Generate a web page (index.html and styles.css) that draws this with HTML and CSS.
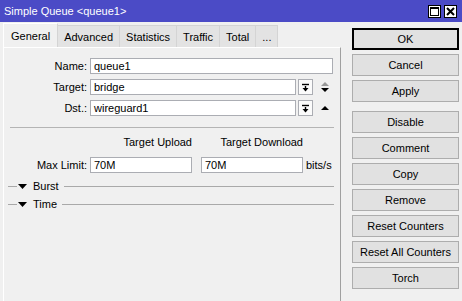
FILE: index.html
```html
<!DOCTYPE html>
<html lang="en">
  <head>
    <meta charset="UTF-8" />
    <title>Simple Queue &lt;queue1&gt;</title>
    <link rel="stylesheet" href="styles.css">
  </head>
  <body>
    <div class="titlebar">
      <span class="title">Simple Queue &lt;queue1&gt;</span>
      <div class="win-btns">
        <span class="win-btn">
          <svg width="9" height="9" viewBox="0 0 9 9"><rect x="0.5" y="0.5" width="8" height="8" fill="none" stroke="#000"/><rect x="0" y="0" width="9" height="2" fill="#000"/></svg>
        </span>
        <span class="win-btn">
          <svg width="9" height="9" viewBox="0 0 9 9"><path d="M1 1 L8 8 M8 1 L1 8" stroke="#000" stroke-width="2"/></svg>
        </span>
      </div>
    </div>

    <div class="main">
      <div class="left">
        <div class="tabs">
          <div class="tab active">General</div>
          <div class="tab">Advanced</div>
          <div class="tab">Statistics</div>
          <div class="tab">Traffic</div>
          <div class="tab">Total</div>
          <div class="tab">...</div>
        </div>

        <div class="panel">
          <div class="row">
            <span class="label">Name:</span>
            <span class="field wide">queue1</span>
          </div>
          <div class="row">
            <span class="label">Target:</span>
            <span class="field mid">bridge</span>
            <span class="drop">
              <svg width="9" height="9" viewBox="0 0 9 9"><path d="M1 1.5 H8" stroke="#000" stroke-width="1.4"/><path d="M4.5 3 V6" stroke="#000" stroke-width="1.4"/><path d="M1.5 5 H7.5 L4.5 8.5 Z" fill="#000"/></svg>
            </span>
            <span class="spin">
              <svg width="10" height="12" viewBox="0 0 10 12"><path d="M1 5 L5 1 L9 5 Z" fill="#999"/><path d="M1 7 L9 7 L5 11 Z" fill="#000"/></svg>
            </span>
          </div>
          <div class="row">
            <span class="label">Dst.:</span>
            <span class="field mid">wireguard1</span>
            <span class="drop">
              <svg width="9" height="9" viewBox="0 0 9 9"><path d="M1 1.5 H8" stroke="#000" stroke-width="1.4"/><path d="M4.5 3 V6" stroke="#000" stroke-width="1.4"/><path d="M1.5 5 H7.5 L4.5 8.5 Z" fill="#000"/></svg>
            </span>
            <span class="spin">
              <svg width="10" height="12" viewBox="0 0 10 12"><path d="M1 8 L5 4 L9 8 Z" fill="#000"/></svg>
            </span>
          </div>

          <div class="sep"></div>

          <div class="heads">
            <span class="label"></span>
            <span class="head">Target Upload</span>
            <span class="head second">Target Download</span>
          </div>
          <div class="row limit">
            <span class="label">Max Limit:</span>
            <span class="field half">70M</span>
            <span class="field half second">70M</span>
            <span class="unit">bits/s</span>
          </div>

          <div class="group first">
            <span class="line short"></span>
            <svg class="caret" width="9" height="5" viewBox="0 0 9 5"><path d="M0 0 H9 L4.5 5 Z" fill="#000"/></svg>
            <span class="group-name">Burst</span>
            <span class="line"></span>
          </div>
          <div class="group">
            <span class="line short"></span>
            <svg class="caret" width="9" height="5" viewBox="0 0 9 5"><path d="M0 0 H9 L4.5 5 Z" fill="#000"/></svg>
            <span class="group-name">Time</span>
            <span class="line"></span>
          </div>
        </div>
      </div>

      <div class="actions">
        <button class="btn default">OK</button>
        <button class="btn">Cancel</button>
        <button class="btn spaced">Apply</button>
        <button class="btn">Disable</button>
        <button class="btn">Comment</button>
        <button class="btn">Copy</button>
        <button class="btn">Remove</button>
        <button class="btn">Reset Counters</button>
        <button class="btn">Reset All Counters</button>
        <button class="btn">Torch</button>
      </div>
    </div>
  </body>
</html>
```

FILE: styles.css
```css
* {
  box-sizing: border-box;
}
body {
  margin: 0;
  width: 462px;
  height: 301px;
  overflow: hidden;
  background-color: #f0f0f0;
  color: #000;
  font-family: "Liberation Sans", Arial, sans-serif;
  font-size: 11px;
}
.titlebar {
  height: 22px;
  background-color: #4b4bc6;
  color: #fff;
  display: flex;
  align-items: center;
  padding: 0 5px 0 4px;
}
.title {
  flex: 1;
  font-size: 11px;
}
.win-btns {
  display: flex;
  gap: 3px;
}
.win-btn {
  width: 13px;
  height: 13px;
  background-color: #fff;
  border: 1px solid #000;
  display: flex;
  align-items: center;
  justify-content: center;
}
.main {
  display: flex;
  height: 279px;
}
.left {
  width: 341px;
  padding-left: 3px;
  display: flex;
  flex-direction: column;
}
.tabs {
  height: 25px;
  display: flex;
  align-items: flex-end;
}
.tab {
  height: 22px;
  padding: 0 6px;
  background-color: #e3e3e3;
  border: 1px solid #d4d4d4;
  border-bottom: none;
  margin-right: -1px;
  display: flex;
  align-items: center;
}
.tab.active {
  height: 24px;
  padding: 0 7px;
  background-color: #f0f0f0;
  border-color: #fff #d4d4d4 transparent #fff;
}
.panel {
  flex: 1;
  padding-top: 10px;
  border-top: 1px solid #fff;
  border-left: 1px solid #fff;
  border-right: 1px solid #a0a0a0;
}
.row {
  display: flex;
  align-items: center;
  height: 16px;
  margin-bottom: 5px;
}
.label {
  width: 86px;
  padding-right: 3px;
  text-align: right;
  flex-shrink: 0;
}
.field {
  height: 16px;
  line-height: 14px;
  padding: 0 3px;
  background-color: #fff;
  border: 1px solid #abadb3;
}
.field.wide {
  width: 243px;
}
.field.mid {
  width: 206px;
}
.field.half {
  width: 102px;
}
.field.second,
.head.second {
  margin-left: 9px;
}
.drop {
  width: 15px;
  height: 16px;
  margin-left: 2px;
  background-color: #fbfbfb;
  border: 1px solid #abadb3;
  display: flex;
  align-items: center;
  justify-content: center;
}
.spin {
  margin-left: 7px;
  display: flex;
}
.sep {
  margin: 11px 6px 0 6px;
  border-top: 1px solid #b4b4b4;
}
.heads {
  display: flex;
  height: 14px;
  line-height: 14px;
  margin-top: 7px;
}
.head {
  width: 102px;
  text-align: right;
}
.row.limit {
  margin-top: 8px;
  margin-bottom: 0;
}
.unit {
  margin-left: 3px;
}
.group {
  display: flex;
  align-items: center;
  height: 14px;
  margin-top: 4px;
}
.group.first {
  margin-top: 6px;
}
.line {
  flex: 1;
  height: 1px;
  margin: 0 6px 0 5px;
  background-color: #a9a9a9;
}
.line.short {
  flex: none;
  width: 9px;
  margin: 0 0 0 4px;
}
.caret {
  margin-left: 1px;
}
.group-name {
  margin-left: 6px;
}
.actions {
  padding: 6px 0 0 11px;
  display: flex;
  flex-direction: column;
  gap: 4px;
}
.btn {
  width: 107px;
  height: 22px;
  padding: 0;
  font: inherit;
  color: #000;
  background-color: #e1e1e1;
  border: 1px solid #adadad;
}
.btn.default {
  border: 2px solid #000;
}
.btn.spaced {
  margin-bottom: 5px;
}
```
